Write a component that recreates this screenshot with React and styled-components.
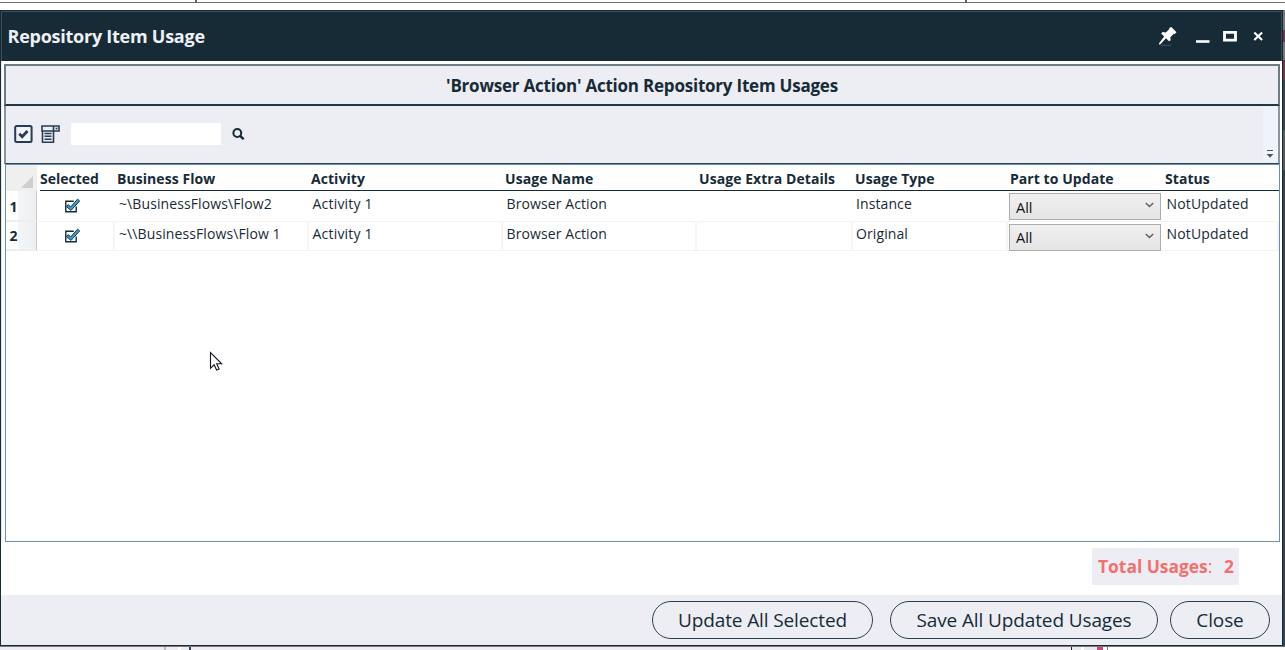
import React from "react";
import styled, { createGlobalStyle } from "styled-components";

const ink = "#172b37";
const panel = "#edeef3";
const blue = "#6c8fb0";

const Global = createGlobalStyle`
  * { box-sizing: border-box; }
  body { margin: 0; background: #fff; overflow: hidden; font-family: "Open Sans", "Noto Sans", sans-serif; color: ${ink}; }
`;

const Desktop = styled.div`
  width: 1285px; height: 650px; display: flex; flex-direction: column; background: #fff;
`;
const BackTop = styled.div`
  height: 10px; flex: none; display: flex; align-items: flex-start;
  background: linear-gradient(#fff 2px, #6d6d70 2px, #6d6d70 3px, #fff 3px);
`;
const BackTick = styled.i`
  width: 2px; height: 3px; margin-left: ${p => p.$gap}px; background: #5c6268;
`;
const Middle = styled.div`display: flex; height: 636px; flex: none;`;
const BackRight = styled.div`
  width: 2px;
  background: linear-gradient(#777 0 20px, #71324a 20px 32px, #777 32px 50px, #71324a 50px 70px, #33434d 70px 120px, #555b62 120px 160px, #33434d 160px);
`;
const BackBottom = styled.div`
  height: 4px; flex: none; display: flex; background: #efecf3; border-top: 1px solid #77777c;
`;
const BackPiece = styled.i`width: ${p => p.$w}px; height: 3px; background: ${p => p.$c};`;

const Window = styled.div`
  width: 1283px; display: flex; flex-direction: column; background: #fff;
  border: 1px solid ${ink};
`;
const TitleBar = styled.header`
  height: 50px; flex: none; display: flex; align-items: center; background: ${ink};
  border: 1px solid #3c4d58; border-bottom: 0;
  padding: 0 17px 2px 5.5px; color: #eef0f5;
`;
const Title = styled.h1`
  margin: 0; flex: 1; font-size: 18px; line-height: 24px; font-weight: 700; letter-spacing: -0.25px;
`;
const Controls = styled.div`display: flex; height: 24px;`;

const Content = styled.main`
  flex: 1; display: flex; flex-direction: column; padding: 3px 2px 0 3px; border-left: 1px solid #e8eaee;
`;
const Heading = styled.h2`
  margin: 0 0 0 -1px; height: 42px; flex: none; background: ${panel}; text-align: center;
  border: 2px solid #6f7b84; border-bottom-color: #213843;
  font-size: 17px; line-height: 39px; font-weight: 700; letter-spacing: -0.22px;
`;
const Toolbar = styled.div`
  height: 58px; flex: none; display: flex; align-items: center; background: ${panel}; margin-left: -1px;
  border: 2px solid #8c959e; border-top: 0; border-bottom: 1px solid #2f4656; padding: 0 0 2px 8px;
`;
const IconSlot = styled.span`display: flex; margin-right: ${p => p.$gap}px;`;
const Search = styled.input`
  width: 150px; height: 22px; border: 0; background: #fff; margin-right: 11px; padding: 0 4px;
`;
const Overflow = styled.div`
  margin-left: auto; width: 15px; height: 54px; background: #edf4fd; border-radius: 0 3px 3px 0;
  display: flex; align-items: flex-end; justify-content: center; padding: 0 1px 2px 0;
`;
const Grid = styled.section`
  height: 378px; flex: none; border: 1px solid ${blue};
`;
const cols = "31px 78px 194px 194px 194px 156px 155px 155px 1fr";
const HeadRow = styled.div`
  display: grid; grid-template: 26px / ${cols};
`;
const Corner = styled.div`
  background: #efefef; display: flex; align-items: flex-end; justify-content: flex-end; padding: 0 4px 3px 0;
`;
const HeadCell = styled.div`
  border-bottom: 1px solid ${ink}; margin-left: ${p => (p.$first ? 3 : 0)}px; padding-left: ${p => (p.$first ? 0 : 2)}px;
  font-size: 14px; line-height: 27px; font-weight: 700; letter-spacing: ${p => (p.$first ? 0 : 0.06)}px; white-space: nowrap;
`;
const Row = styled.div`
  display: grid; grid-template: ${p => p.$h}px / ${cols};
`;
const RowHead = styled.div`
  background: linear-gradient(90deg, #fff 12px, #f4f5f8 12px, #edeff2 29px);
  border-right: 1px solid #c8c8cb; border-bottom: 2px solid #eeeeef; padding: ${p => p.$top}px 0 0 3.5px;
  font-size: 14px; line-height: 28px; font-weight: 700;
`;
const Cell = styled.div`
  border-right: 2px solid ${p => (p.$lined ? "#f5f5f5" : "transparent")};
  border-bottom: 1px solid #f3f3f3; padding-left: ${p => p.$pad ?? 3.5}px;
  font-size: 14px; line-height: ${p => (p.$lined ? 23 : 25)}px; letter-spacing: ${p => p.$ls ?? 0.1}px; white-space: nowrap;
`;
const CheckCell = styled(Cell)`padding: ${p => (p.$lined ? 6 : 7)}px 0 0 27px; display: flex;`;
const ComboCell = styled(Cell)`padding: 2px 0 0 1px; border-right: 0;`;
const Combo = styled.button`
  width: 152px; height: 27px; display: flex; align-items: center; justify-content: space-between;
  border: 1px solid #acacac; background: linear-gradient(#f0f0f0, #e5e5e5); padding: ${p => p.$top}px 6px 0 6px;
  font: 14.5px/22px "Open Sans", sans-serif; color: #111;
  svg { margin-top: ${p => -3 - p.$top}px; }
`;
const TotalLine = styled.div`display: flex; justify-content: flex-end; height: 53px; flex: none; padding: 6px 43px 0 0;`;
const Total = styled.div`
  width: 147px; height: 37px; background: ${panel}; color: #f36f70; font-size: 17.4px; line-height: 37px; font-weight: 700;
  padding: 0 5px 0 6px; display: flex; white-space: nowrap;
`;
const Colon = styled.span`margin-right: auto; font-weight: 400;`;
const Footer = styled.footer`
  height: 50px; flex: none; display: flex; justify-content: flex-end; align-items: flex-start;
  gap: 17px; padding: 6px 12px 0; background: ${panel};
`;
const Pill = styled.button`
  width: ${p => p.$w}px; height: 38px; margin-right: ${p => p.$mr || 0}px; border: 1.5px solid #2d414c; border-radius: 20px; background: transparent; padding: 0;
  font: 19px/35px "Open Sans", sans-serif; letter-spacing: -0.12px; color: ${ink}; white-space: nowrap;
`;
const Pointer = styled.svg`position: absolute; left: 209px; top: 351px;`;

const Check = () => (
  <svg width="17" height="16" viewBox="0 0 17 16">
    <path d="M12.2 8.5v5.3H1.8V3.3h8" fill="none" stroke={ink} strokeWidth="1.4" />
    <path d="M2.3 8.5 4.4 6.6 6.6 9 13.5 1.2 15.7 2.9 7 12.4Z" fill="#359bd0" stroke="#183d53" strokeWidth="1" />
  </svg>
);

const rows = [
  { n: 1, flow: "~\\BusinessFlows\\Flow2", type: "Instance" },
  { n: 2, flow: "~\\\\BusinessFlows\\Flow 1", type: "Original" },
];
const heads = ["Business Flow", "Activity", "Usage Name", "Usage Extra Details", "Usage Type", "Part to Update", "Status"];

export default function App() {
  return (
    <Desktop>
      <Global />
      <BackTop><BackTick $gap={195} /><BackTick $gap={768} /></BackTop>
      <Middle>
        <Window>
          <TitleBar>
            <Title>Repository Item Usage</Title>
            <Controls>
              <svg width="106" height="24" viewBox="1158 24 106 24">
                <path d="M1171.3 27 1176.5 32.2 1174.8 34 1173.8 33.7 1170.3 37.2 1170.7 40.2 1169 41.2 1166 38.3 1160.2 44.5H1159l.2-1.4 5-6.6-3-3.1 1.5-1.5 3.2.5 3.5-3.5-.3-1Z" fill="#fff" />
                <path d="M1161 45.3h10" stroke="#44545f" strokeWidth="1" />
                <path d="M1196 41.5h13.5" stroke="#fff" strokeWidth="2.6" />
                <path d="M1224.5 32.3h11v7.8h-11z" fill="none" stroke="#fff" strokeWidth="2.8" />
                <path d="M1254.3 32.5l7.8 7.6M1262.1 32.5l-7.8 7.6" stroke="#fff" strokeWidth="2.1" />
              </svg>
            </Controls>
          </TitleBar>
          <Content>
            <Heading>'Browser Action' Action Repository Item Usages</Heading>
            <Toolbar>
              <IconSlot $gap={8}>
                <svg width="19" height="18" viewBox="0 0 19 18">
                  <rect x="1.2" y="1" width="16.4" height="16" rx="1.5" fill="#f1f3f8" stroke="#263b57" strokeWidth="2" />
                  <path d="M5.3 8.7 8.2 11.7 13.5 6" fill="none" stroke="#263b57" strokeWidth="2.8" />
                </svg>
              </IconSlot>
              <IconSlot $gap={11}>
                <svg width="19" height="18" viewBox="0 0 19 18">
                  <path d="M1 1h17v5H1zM12.5 1v5M1.5 6v11.3h11V6" fill="none" stroke="#263b57" strokeWidth="1.6" />
                  <path d="M14 2.8h3l-1.5 2z" fill="#263b57" />
                  <path d="M3.5 8.5h7M3.5 11.3h7M3.5 14.2h7" stroke="#263b57" strokeWidth="1.4" />
                </svg>
              </IconSlot>
              <Search aria-label="Search" />
              <svg width="13" height="12" viewBox="0 0 13 12">
                <circle cx="5.3" cy="5" r="3.9" fill="none" stroke={ink} strokeWidth="2" />
                <path d="M8 7.8 11.7 11.2" stroke={ink} strokeWidth="2.4" />
              </svg>
              <Overflow>
                <svg width="8" height="9" viewBox="0 0 8 9">
                  <path d="M1 0.5h6" stroke="#555" />
                  <path d="M0.5 4h7L4 7.8z" fill="#555" />
                </svg>
              </Overflow>
            </Toolbar>
            <Grid>
              <HeadRow>
                <Corner><svg width="12" height="12"><path d="M12 0v12H0z" fill="#cfcfcf" /></svg></Corner>
                <HeadCell $first>Selected</HeadCell>
                {heads.map(h => <HeadCell key={h}>{h}</HeadCell>)}
              </HeadRow>
              {rows.map((r, i) => (
                <Row key={r.n} $h={i ? 29 : 31}>
                  <RowHead $top={i ? 0 : 2}>{r.n}</RowHead>
                  <CheckCell $lined={i}><Check /></CheckCell>
                  <Cell $lined={i} $pad={4}>{r.flow}</Cell>
                  <Cell $lined={i} $ls={0.2}>Activity 1</Cell>
                  <Cell $lined={i}>Browser Action</Cell>
                  <Cell $lined={i} />
                  <Cell $lined={i} $pad={3}>{r.type}</Cell>
                  <ComboCell>
                    <Combo $top={i ? 0 : 3}>All
                      <svg width="9" height="6"><path d="M.8 1 4.5 4.5 8.2 1" fill="none" stroke="#606060" strokeWidth="1.5" /></svg>
                    </Combo>
                  </ComboCell>
                  <Cell $lined={i} $ls={0.17}>NotUpdated</Cell>
                </Row>
              ))}
            </Grid>
          </Content>
          <TotalLine><Total>Total Usages<Colon>:</Colon><span>2</span></Total></TotalLine>
          <Footer>
            <Pill $w={221}>Update All Selected</Pill>
            <Pill $w={268} $mr={-5}>Save All Updated Usages</Pill>
            <Pill $w={100}>Close</Pill>
          </Footer>
        </Window>
        <BackRight />
      </Middle>
      <BackBottom>
        <BackPiece $w={164} $c="#efecf3" /><BackPiece $w={2} $c="#bbb" /><BackPiece $w={12} $c="#efecf3" />
        <BackPiece $w={3} $c="#fff" /><BackPiece $w={8} $c="#efecf3" /><BackPiece $w={2} $c="#34444f" />
        <BackPiece $w={880} $c="#efecf3" /><BackPiece $w={1} $c="#222" /><BackPiece $w={9} $c="#e8e8ed" />
        <BackPiece $w={3} $c="#fff" /><BackPiece $w={13} $c="#e8e8ed" /><BackPiece $w={6} $c="#cf4379" />
        <BackPiece $w={4} $c="#fff" /><BackPiece $w={1} $c="#6b7f88" /><BackPiece $w={177} $c="#fff" />
      </BackBottom>
      <Pointer width="14" height="21" viewBox="0 0 14 21">
        <path d="M1.5 1.5v15.8l3.6-3.5 2.5 5.3 2.5-1.1-2.4-5.2h5z" fill="#fff" stroke="#15151d" strokeWidth="1.1" />
      </Pointer>
    </Desktop>
  );
}
